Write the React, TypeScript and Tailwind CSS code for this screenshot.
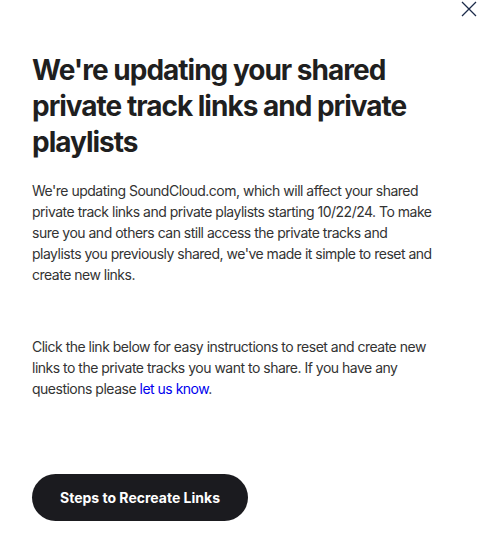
export default function App() {
  return (
    <div className="relative w-[478px] h-[544px] bg-white overflow-hidden" style={{ fontFamily: "Inter, 'Noto Sans', sans-serif" }}>
      {/* Close button */}
      <button className="absolute top-[1px] right-[1px] w-[16px] h-[16px] text-[#1c2b4a]">
        <svg viewBox="0 0 16 16" className="w-[16px] h-[16px]" fill="none" stroke="currentColor" strokeWidth={1.3}>
          <path d="M1 1L15 15M15 1L1 15" />
        </svg>
      </button>

      <div className="pt-[52px] px-8">
        <h1 className="text-[28px] leading-[36px] font-bold text-[#1f1f1f] tracking-[-1px]">
          We're updating your shared private track links and private playlists
        </h1>

        <p className="mt-[20px] w-[405px] text-[14px] leading-[21px] text-[#333] tracking-[-0.5px]">
          We're updating SoundCloud.com, which will affect your shared private track links and private playlists starting 10/22/24. To make sure you and others can still access the private tracks and playlists you previously shared, we've made it simple to reset and create new links.
        </p>

        <p className="mt-[51px] w-[405px] text-[14px] leading-[21px] text-[#333] tracking-[-0.5px]">
          Click the link below for easy instructions to reset and create new links to the private tracks you want to share. If you have any questions please{" "}
          <a href="#" className="text-[#0000ee]">let us know</a>.
        </p>

        <button className="mt-[75px] h-[47px] px-7 rounded-full bg-[#1b1b1f] text-white text-[14px] font-bold">
          Steps to Recreate Links
        </button>
      </div>
    </div>
  );
}
